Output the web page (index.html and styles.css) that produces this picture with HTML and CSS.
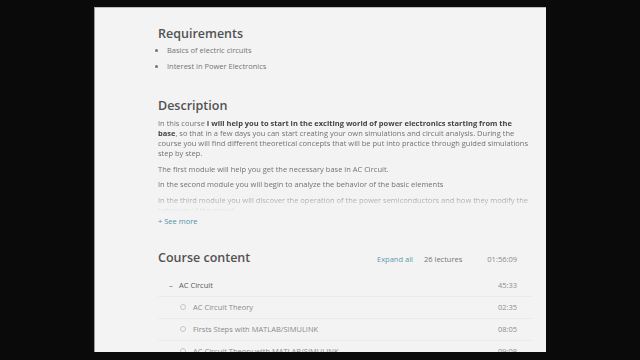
FILE: index.html
```html
<!DOCTYPE html>
<html lang="en">
<head>
    <meta charset="UTF-8">
    <meta name="viewport" content="width=device-width, initial-scale=1.0">
    <title>Course details</title>
    <link rel="stylesheet" href="styles.css">
</head>
<body>
    <div class="panel">
        <div class="section">
            <h2>Requirements</h2>
            <ul class="reqs">
                <li>Basics of electric circuits</li>
                <li>Interest in Power Electronics</li>
            </ul>
        </div>

        <div class="section desc-section">
            <h2>Description</h2>
            <div class="desc">
                <p>In this course <b>I will help you to start in the exciting world of power electronics starting from the base</b>, so that in a few days you can start creating your own simulations and circuit analysis. During the course you will find different theoretical concepts that will be put into practice through guided simulations step by step.</p>
                <p>The first module will help you get the necessary base in AC Circuit.</p>
                <p>In the second module you will begin to analyze the behavior of the basic elements</p>
                <p>In the third module you will discover the operation of the power semiconductors and how they modify the behavior of the circuit.</p>
            </div>
            <a class="see-more" href="#">+ See more</a>
        </div>

        <div class="section content-section">
            <div class="content-head">
                <h2>Course content</h2>
                <a class="expand" href="#">Expand all</a>
                <span class="count">26 lectures</span>
                <span class="total">01:56:09</span>
            </div>
            <div class="chapter">
                <span class="minus">&ndash;</span>
                <span class="chapter-title">AC Circuit</span>
                <span class="time">45:33</span>
            </div>
            <div class="lecture">
                <span class="dot"></span>
                <span class="lecture-title">AC Circuit Theory</span>
                <span class="time">02:35</span>
            </div>
            <div class="lecture">
                <span class="dot"></span>
                <span class="lecture-title">Firsts Steps with MATLAB/SIMULINK</span>
                <span class="time">08:05</span>
            </div>
            <div class="lecture">
                <span class="dot"></span>
                <span class="lecture-title">AC Circuit Theory with MATLAB/SIMULINK</span>
                <span class="time">09:08</span>
            </div>
        </div>
    </div>
</body>
</html>
```

FILE: styles.css
```css
body {
    margin: 0;
    background: #0a0a0a;
    font-family: "Open Sans", "Liberation Sans", sans-serif;
}
.panel {
    margin: 7px 0 0 94px;
    width: 452px;
    height: 345px;
    box-sizing: border-box;
    padding: 18px 17px 0 63px;
    background: #f3f3f4;
    border-left: 1px solid #9a9a9a;
    border-top: 1px solid #bdbdbd;
    overflow: hidden;
}
h2 {
    margin: 0;
    font-size: 12.5px;
    line-height: 16px;
    font-weight: 600;
    color: #525252;
}
.reqs {
    margin: 3px 0 0;
    padding-left: 9px;
    font-size: 7.5px;
    line-height: 10px;
    color: #747474;
}
.reqs li {
    margin-bottom: 5.5px;
}
.desc-section {
    margin-top: 27px;
}
.desc {
    margin-top: 4px;
    height: 94px;
    overflow: hidden;
    font-size: 7.5px;
    line-height: 10.3px;
    color: #727272;
    -webkit-mask-image: linear-gradient(to bottom, #000 76%, rgba(0,0,0,0.5) 88%, transparent 100%);
    mask-image: linear-gradient(to bottom, #000 76%, rgba(0,0,0,0.5) 88%, transparent 100%);
}
.desc p {
    margin: 0 0 5.2px;
}
.desc b {
    color: #444;
}
.see-more {
    display: block;
    margin-top: 4px;
    font-size: 7.5px;
    line-height: 10px;
    color: #5294a3;
    text-decoration: none;
}
.content-section {
    margin-top: 24px;
}
.content-head {
    display: flex;
    align-items: baseline;
    margin-right: 12px;
    font-size: 7.5px;
    color: #747474;
}
.content-head h2 {
    flex: 1;
}
.expand {
    color: #5f9ca8;
    text-decoration: none;
    margin-right: 11px;
}
.count {
    margin-right: 25px;
}
.total {
    color: #8a8a8a;
}
.chapter,
.lecture {
    display: flex;
    align-items: center;
    font-size: 7.5px;
    color: #8a8a8a;
    border-bottom: 1px solid #ebebec;
    margin-right: -3px;
    padding-right: 15px;
}
.chapter {
    height: 21px;
    margin-top: 9px;
    padding-left: 11px;
    color: #5a5a5a;
}
.minus {
    color: #4e9b8f;
    font-weight: 600;
    width: 10px;
}
.chapter-title,
.lecture-title {
    flex: 1;
}
.lecture {
    height: 21px;
    padding-left: 22px;
}
.dot {
    width: 4px;
    height: 4px;
    border: 1px solid #c6c6c6;
    border-radius: 50%;
    margin-right: 7px;
}
.time {
    color: #8d8d8d;
}
```
